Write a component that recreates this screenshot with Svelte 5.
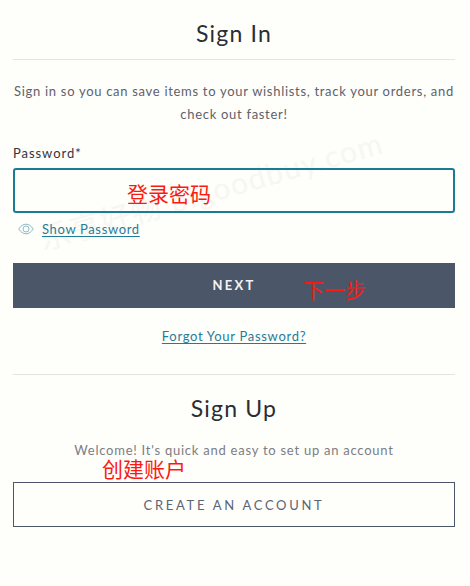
<script>
  const title = 'Sign In';
</script>

<main class="page">
  <div class="watermark">乐享好物 bigoodbuy.com</div>
  <section class="signin">
    <h1>{title}</h1>
    <p class="intro">Sign in so you can save items to your wishlists, track your orders, and check out faster!</p>
    <label class="label" for="pw">Password*</label>
    <div class="field">
      <input id="pw" class="input" type="password" />
      <span class="note note-pw">登录密码</span>
    </div>
    <div class="show">
      <svg class="eye" viewBox="0 0 16 12" width="16" height="12" aria-hidden="true">
        <path d="M.7 6C2.7 3 5.2 1.2 8 1.2S13.3 3 15.3 6C13.3 9 10.800 10.800 8 10.800S2.700 9 .7 6Z" fill="none" stroke="#8fbcc8" stroke-width="1"/>
        <circle cx="8" cy="6" r="3" fill="none" stroke="#8fbcc8" stroke-width="1"/>
      </svg>
      <a href="#show">Show Password</a>
    </div>
    <div class="next-wrap">
      <button class="next">NEXT</button>
      <span class="note note-next">下一步</span>
    </div>
    <a class="forgot" href="#forgot">Forgot Your Password?</a>
  </section>
  <section class="signup">
    <h2>Sign Up</h2>
    <p class="welcome">Welcome! It's quick and easy to set up an account</p>
    <div class="create-wrap">
      <span class="note note-create">创建账户</span>
      <button class="create">CREATE AN ACCOUNT</button>
    </div>
  </section>
</main>

<style>
  :global(body) { margin: 0; background: #fefefb; }
  .page {
    position: relative;
    isolation: isolate;
    width: 442px;
    height: 586px;
    padding: 0 15px 0 13px;
    overflow: hidden;
    font-family: Lato, "Noto Sans CJK SC", sans-serif;
    color: #2d2f38;
  }
  h1, h2 {
    margin: 0;
    font-weight: 400;
    font-size: 23px;
    letter-spacing: 1.2px;
    text-align: center;
    color: #2b2d35;
  }
  h1 { padding: 19px 0 11px; line-height: 29px; border-bottom: 1px solid #e4e4e1; }
  .intro {
    margin: 20px 0 0;
    font-size: 13px;
    line-height: 23px;
    letter-spacing: 0.7px;
    text-align: center;
    color: #5f616b;
  }
  .label {
    display: block;
    margin-top: 18px;
    font-size: 13px;
    line-height: 18px;
    letter-spacing: 0.95px;
    color: #33353d;
  }
  .field { position: relative; margin-top: 6px; }
  .input {
    display: block;
    box-sizing: border-box;
    width: 100%;
    height: 45px;
    border: 2px solid #1b7a96;
    border-radius: 3px;
    background: transparent;
    outline: none;
  }
  .note {
    position: absolute;
    color: #fb1a12;
    font-family: "Noto Sans CJK SC", sans-serif;
    font-size: 21px;
    line-height: 26px;
    white-space: nowrap;
  }
  .note-pw { left: 114px; top: 12px; }
  .show {
    display: flex;
    align-items: center;
    gap: 8px;
    margin-top: 7px;
    padding-left: 5px;
    height: 18px;
    font-size: 13px;
    letter-spacing: 0.65px;
  }
  a { color: #1f7d98; text-decoration: underline; text-underline-offset: 2px; }
  .next-wrap { position: relative; margin-top: 25px; }
  .next {
    display: block;
    width: 100%;
    height: 45px;
    border: 0;
    background: #4b5768;
    color: #f2f3f3;
    font: 700 13px Lato, sans-serif;
    letter-spacing: 2.3px;
    padding: 0 0 2px;
  }
  .note-next { left: 290px; top: 13px; }
  .forgot {
    display: block;
    width: max-content;
    margin: 19px auto 0;
    font-size: 13px;
    line-height: 18px;
    letter-spacing: 0.7px;
  }
  .signup { margin-top: 29px; border-top: 1px solid #e4e4e1; }
  h2 { margin-top: 18px; line-height: 30px; }
  .welcome {
    margin: 18px 0 0;
    font-size: 13px;
    line-height: 18px;
    letter-spacing: 0.75px;
    text-align: center;
    color: #7c7d83;
  }
  .create-wrap { position: relative; margin-top: 23px; }
  .create {
    display: block;
    width: 100%;
    height: 45px;
    border: 1px solid #4b5768;
    background: transparent;
    color: #5b6473;
    font: 400 13px Lato, sans-serif;
    letter-spacing: 2.7px;
  }
  .note-create { left: 89px; top: -23px; line-height: 18px; }
  .watermark {
    position: absolute;
    z-index: -1;
    left: 40px;
    top: 216px;
    transform: rotate(-16deg);
    transform-origin: left center;
    font-size: 30px;
    letter-spacing: 1.5px;
    color: #f6f6f2;
    white-space: nowrap;
    pointer-events: none;
  }
</style>
